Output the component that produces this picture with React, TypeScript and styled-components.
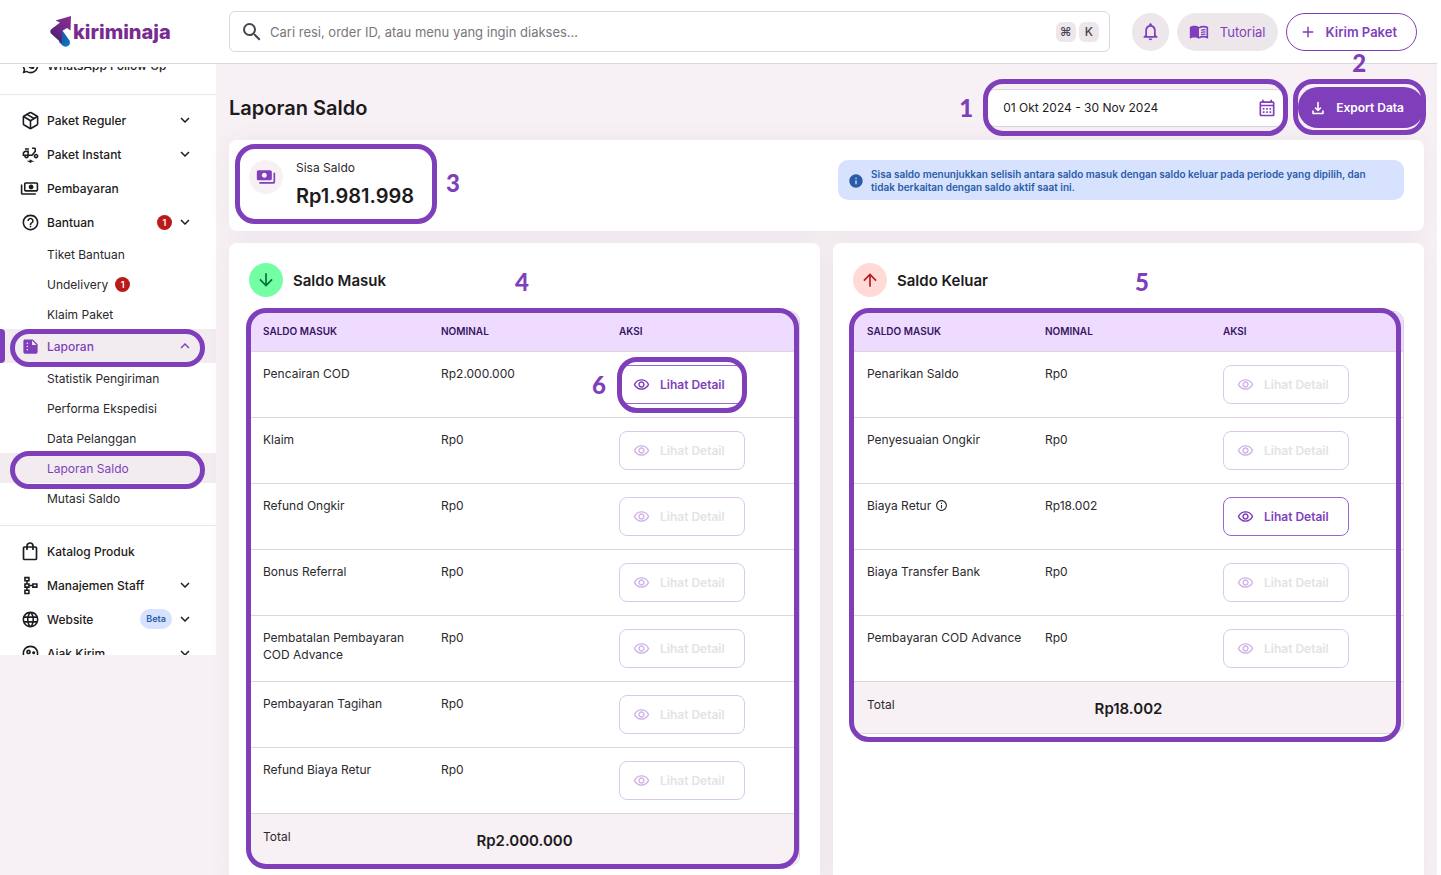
import React from "react";
import styled, { createGlobalStyle, css } from "styled-components";
import {
  MdAdd,
  MdArrowDownward,
  MdArrowUpward,
  MdExpandLess,
  MdExpandMore,
  MdHelpOutline,
  MdInfo,
  MdInfoOutline,
  MdLanguage,
  MdNotificationsNone,
  MdOutlineCalendarMonth,
  MdOutlineElectricMoped,
  MdOutlinePayments,
  MdOutlineRemoveRedEye,
  MdOutlineSchema,
  MdOutlineSupervisedUserCircle,
  MdPayments,
  MdSearch,
  MdSummarize,
} from "react-icons/md";
import { RiWhatsappLine } from "react-icons/ri";
import { LuPackage } from "react-icons/lu";

const color = {
  purple: "#7f3fbb",
  ink: "#1d1b20",
  text: "#2b292d",
  canvas: "#f7f1f5",
  chip: "#ede7eb",
  line: "#dcd6dc",
  red: "#ba1a1a",
  blue: "#2a5ca8",
  blueSoft: "#d7e2ff",
};

const GlobalStyle = createGlobalStyle`
  *, *::before, *::after { box-sizing: border-box; }
  body {
    margin: 0;
    background: #fff;
    color: ${color.text};
    font-family: Inter, "Liberation Sans", sans-serif;
    font-size: 12px;
  }
  button, input { font: inherit; color: inherit; }
  ul { list-style: none; margin: 0; padding: 0; }
  h1, h2, p { margin: 0; }
  a { color: inherit; text-decoration: none; }
`;

/* ---------- Guide annotations ---------- */

interface OutlineProps {
  $top: number;
  $right: number;
  $bottom: number;
  $left: number;
}

const Outline = styled.span<OutlineProps>`
  position: absolute;
  z-index: 2;
  top: ${(p) => p.$top}px;
  right: ${(p) => p.$right}px;
  bottom: ${(p) => p.$bottom}px;
  left: ${(p) => p.$left}px;
  border: 5px solid ${color.purple};
  border-radius: 20px;
  pointer-events: none;
`;

const StepNumber = styled.span<{ $top: number; $left: string }>`
  position: absolute;
  z-index: 2;
  top: ${(p) => p.$top}px;
  left: ${(p) => p.$left};
  color: ${color.purple};
  font: 900 24px/24px Lato, sans-serif;
  pointer-events: none;
`;

/* ---------- Shell ---------- */

const Shell = styled.div`
  display: flex;
  flex-direction: column;
  height: 100vh;
  padding-right: 4px;
  overflow: hidden;
`;

const Header = styled.header`
  display: flex;
  flex: none;
  align-items: center;
  height: 64px;
  padding-right: 20px;
  border-bottom: 1px solid ${color.line};
  background: #fff;
`;

const Brand = styled.a`
  display: flex;
  flex: none;
  align-items: center;
  gap: 2px;
  width: 229px;
  padding-left: 50px;
  color: #782b90;
  font-size: 20px;
  font-weight: 800;
  line-height: 24px;
`;

const SearchBox = styled.label`
  display: flex;
  flex: 1;
  align-items: center;
  gap: 6px;
  height: 41px;
  margin-right: 22px;
  padding: 0 10px;
  border: 1px solid ${color.line};
  border-radius: 6px;
`;

const SearchInput = styled.input`
  flex: 1;
  min-width: 0;
  padding: 0;
  border: 0;
  outline: 0;
  background: none;
  font-size: 13px;

  &::placeholder {
    color: #7b767d;
    opacity: 1;
  }
`;

const Key = styled.kbd`
  display: grid;
  place-items: center;
  width: 20px;
  height: 20px;
  margin-left: -3px;
  border-radius: 6px;
  background: ${color.chip};
  color: #49454f;
  font: 500 12px/20px Inter, "DejaVu Sans", sans-serif;
`;

const HeaderActions = styled.div`
  display: flex;
  gap: 8px;
`;

const PillButton = styled.button<{ $variant: "soft" | "outline" }>`
  display: flex;
  align-items: center;
  justify-content: center;
  gap: 11px;
  min-width: 37px;
  height: 38px;
  padding: 0 12px;
  border: 0;
  border-radius: 19px;
  background: ${color.chip};
  color: ${color.purple};
  font-size: 13px;
  white-space: nowrap;

  ${(p) =>
    p.$variant === "outline" &&
    css`
      gap: 9px;
      padding: 0 19px 0 12px;
      border: 1px solid ${color.purple};
      background: #fff;
      font-weight: 600;
    `}
`;

const RoundButton = styled(PillButton)`
  width: 37px;
  padding: 0;
`;

const Body = styled.div`
  display: flex;
  flex: 1;
  min-height: 0;
  align-items: flex-start;
  background: ${color.canvas};
`;

/* ---------- Sidebar ---------- */

const Sidebar = styled.nav`
  flex: none;
  width: 216px;
  height: calc(75vh - 65px);
  padding-top: 3px;
  background: #fff;
`;

const SidebarScroll = styled.div`
  height: 100%;
  overflow: hidden;
`;

const MenuGroup = styled.ul`
  padding: 8px 0 12px;
  border-top: 1px solid #ebe6ea;

  &:first-child {
    margin-top: -27px;
    border-top: 0;
  }
`;

const MenuEntry = styled.li`
  position: relative;
`;

const MenuLink = styled.a<{ $active?: boolean }>`
  display: flex;
  align-items: center;
  gap: 8px;
  height: 34px;
  padding: 0 22px 0 21px;
  color: ${color.ink};
  font-weight: 500;
  white-space: nowrap;

  ${(p) =>
    p.$active &&
    css`
      background: #f2ecf1;
      color: ${color.purple};

      &::before {
        content: "";
        position: absolute;
        top: 0;
        bottom: 0;
        left: 0;
        width: 5px;
        border-radius: 0 4px 4px 0;
        background: ${color.purple};
      }
    `}
`;

const MenuIcon = styled.span<{ $mirrored?: boolean }>`
  display: grid;
  place-items: center;
  width: 18px;
  height: 18px;
  font-size: 19px;
  transform: ${(p) => (p.$mirrored ? "scaleX(-1)" : "none")};
`;

const MenuEnd = styled.span`
  display: flex;
  align-items: center;
  gap: 4px;
  margin-left: auto;
  font-size: 18px;
`;

const SubLink = styled.a<{ $active?: boolean }>`
  display: flex;
  align-items: center;
  gap: 7px;
  height: 30px;
  padding-left: 47px;
  background: ${(p) => (p.$active ? "#f2ecf1" : "none")};
  color: ${(p) => (p.$active ? color.purple : color.text)};
`;

const CountBadge = styled.span`
  display: grid;
  place-items: center;
  width: 15px;
  height: 15px;
  border-radius: 50%;
  background: ${color.red};
  color: #fff;
  font-size: 9px;
  font-weight: 600;
`;

const BetaBadge = styled.span`
  padding: 0 6px;
  border-radius: 10px;
  background: ${color.blueSoft};
  color: ${color.blue};
  font-size: 9px;
  font-weight: 600;
  line-height: 20px;
`;

/* ---------- Main ---------- */

const Main = styled.main`
  display: flex;
  flex: 1;
  flex-direction: column;
  gap: 12px;
  min-width: 0;
  height: 100%;
  padding: 23px 13px 0;
`;

const TitleRow = styled.div`
  display: flex;
  flex: none;
  align-items: center;
  height: 41px;
`;

const PageTitle = styled.h1`
  color: ${color.ink};
  font-size: 20px;
  font-weight: 600;
`;

const DateField = styled.label`
  position: relative;
  display: flex;
  align-items: center;
  width: 298px;
  height: 38px;
  margin: 0 13px 0 auto;
  padding: 0 7px 0 15px;
  border: 1px solid ${color.line};
  border-radius: 8px;
  background: #fff;
  color: ${color.purple};
`;

const DateInput = styled.input`
  flex: 1;
  min-width: 0;
  padding: 0;
  border: 0;
  outline: 0;
  background: none;
  color: ${color.ink};
`;

const ExportButton = styled.button`
  position: relative;
  display: flex;
  align-items: center;
  gap: 10px;
  height: 41px;
  padding: 0 20px 0 12px;
  border: 0;
  border-radius: 20px;
  background: ${color.purple};
  color: #fff;
  font-weight: 600;
  white-space: nowrap;
`;

const Card = styled.section`
  position: relative;
  padding: 20px;
  border-radius: 8px;
  background: #fff;
  box-shadow: 0 0 24px rgba(70, 40, 60, 0.06);
`;

const BalanceCard = styled(Card)`
  display: flex;
  flex: none;
  align-items: flex-start;
  gap: 13px;
  height: 91px;
`;

const RoundIcon = styled.span<{ $bg: string; $fg: string }>`
  display: grid;
  flex: none;
  place-items: center;
  width: 34px;
  height: 34px;
  border-radius: 50%;
  background: ${(p) => p.$bg};
  color: ${(p) => p.$fg};
  font-size: 20px;
`;

const BalanceLabel = styled.p`
  line-height: 16px;
`;

const BalanceValue = styled.p`
  margin-top: 8px;
  color: ${color.ink};
  font-size: 20px;
  font-weight: 600;
  line-height: 24px;
`;

const Notice = styled.p`
  display: flex;
  flex: 0 0 49%;
  align-items: center;
  gap: 7px;
  min-height: 40px;
  margin-left: auto;
  padding: 8px 20px 6px 10px;
  border-radius: 10px;
  background: ${color.blueSoft};
  color: ${color.blue};
  font-size: 10px;
  font-weight: 600;
  line-height: 13px;

  svg {
    flex: none;
  }
`;

const Columns = styled.div`
  display: grid;
  flex: 1 0 auto;
  grid-template-columns: 1fr 1fr;
  gap: 13px;
`;

const CardHeading = styled.div`
  display: flex;
  align-items: center;
  gap: 10px;
  margin-bottom: 14px;
`;

const CardTitle = styled.h2`
  color: ${color.ink};
  font-size: 15px;
  font-weight: 600;
`;

const TableFrame = styled.div`
  position: relative;
`;

const Table = styled.table`
  width: 100%;
  table-layout: fixed;
  border: 1px solid ${color.line};
  border-radius: 10px;
  border-spacing: 0;
  overflow: hidden;
`;

const HeadCell = styled.th`
  height: 40px;
  padding: 0 13px 2px;
  border-bottom: 1px solid ${color.line};
  background: #eedbff;
  color: #36155f;
  font-size: 10px;
  font-weight: 600;
  text-align: left;

  &:not(:last-child) {
    width: 178px;
  }
`;

const Cell = styled.td`
  height: 66px;
  padding: 13px 8px 0 13px;
  border-bottom: 1px solid ${color.line};
  line-height: 17px;
  vertical-align: top;

  svg {
    vertical-align: -2px;
  }
`;

const ActionCell = styled(Cell)`
  line-height: 0;
`;

const DetailButton = styled.button`
  position: relative;
  display: inline-flex;
  align-items: center;
  gap: 10px;
  height: 39px;
  padding: 0 19px 0 13px;
  border: 1px solid #9b66cf;
  border-radius: 8px;
  background: #fff;
  color: ${color.purple};
  font-weight: 600;
  line-height: 16px;
  white-space: nowrap;

  &:disabled {
    border-color: #dcc8ef;
    color: #e4e2e5;
  }

  &:disabled svg {
    color: #d0b5e8;
  }
`;

const TotalCell = styled.td`
  padding: 0 13px;
  background: ${color.canvas};
`;

const TotalLine = styled.div`
  display: grid;
  grid-template-columns: 1fr auto 1fr;
  align-items: start;
  height: 51px;
  padding-top: 14px;
  line-height: 17px;
`;

const TotalValue = styled.strong`
  color: ${color.ink};
  font-size: 15px;
  font-weight: 600;
  line-height: 26px;
`;

/* ---------- Drawings ---------- */

const BrandMark = () => (
  <svg width="21" height="31" viewBox="0 0 21 31" aria-hidden="true">
    <defs>
      <linearGradient id="mark-purple" x1="1" y1="0" x2="0.2" y2="1">
        <stop offset="0" stopColor="#8a2c91" />
        <stop offset="0.5" stopColor="#6f2a88" />
        <stop offset="1" stopColor="#3f1d6e" />
      </linearGradient>
      <linearGradient id="mark-blue" x1="0" y1="0" x2="1" y2="1">
        <stop offset="0" stopColor="#1b4fa0" />
        <stop offset="1" stopColor="#0a7cc4" />
      </linearGradient>
    </defs>
    <path d="M12 14 19.500 24.500q1.500 4-1.500 5.500-3 1.500-5.500-.5L9 26Z" fill="url(#mark-blue)" />
    <path d="M21 0 20.500 14.500 17 12 12 15V27.500L1 17.500Q-.5 15.500 1 13.500L10 6.500 5.500 4.500Z" fill="url(#mark-purple)" />
  </svg>
);

const BagIcon = () => (
  <svg width="18" height="19" viewBox="0 0 18 19" fill="none" stroke="currentColor" strokeWidth="1.700" aria-hidden="true">
    <rect x="2.500" y="5" width="13" height="12.500" rx="1" />
    <path d="M6 8V4a3 3 0 0 1 6 0v4" />
  </svg>
);

const DownloadIcon = () => (
  <svg width="16" height="16" viewBox="0 0 16 16" fill="none" stroke="currentColor" strokeWidth="1.600" aria-hidden="true">
    <path d="M8 2.500v8M5.500 8l2.500 2.500L10.500 8M3 11v2.500h10V11" strokeLinejoin="round" strokeLinecap="round" />
  </svg>
);

const BookIcon = () => (
  <svg width="20" height="20" viewBox="0 0 24 24" fill="none" stroke="currentColor" aria-hidden="true">
    <path
      d="M1 6c1.500-1 3.500-1.500 5.500-1.500S10.500 5 12 6v14c-1.500-1-3.500-1.500-5.500-1.500S2.500 19 1 20Z"
      fill="currentColor"
      stroke="none"
    />
    <path d="M12 7c1.500-1 3.500-1.500 5.500-1.500 1.500 0 3.200.3 4.500 1v12c-1.300-.6-3-.9-4.500-.9-2 0-4 .5-5.500 1.400" strokeWidth="2" />
    <path d="M14.500 10c1.700-.7 3.500-.9 5.300-.6M14.500 12.700c1.700-.7 3.500-.9 5.300-.6M14.500 15.400c1.700-.7 3.500-.9 5.300-.6" strokeWidth="1.500" />
  </svg>
);

/* ---------- Data ---------- */

interface SubItem {
  label: string;
  count?: number;
  active?: boolean;
}

interface Item {
  label: string;
  icon: React.ReactNode;
  mirrored?: boolean;
  expandable?: boolean;
  active?: boolean;
  count?: number;
  beta?: boolean;
  children?: SubItem[];
}

const menu: Item[][] = [
  [{ label: "WhatsApp Follow Up", icon: <RiWhatsappLine /> }],
  [
    { label: "Paket Reguler", icon: <LuPackage />, expandable: true },
    { label: "Paket Instant", icon: <MdOutlineElectricMoped />, expandable: true },
    { label: "Pembayaran", icon: <MdOutlinePayments />, mirrored: true },
    {
      label: "Bantuan",
      icon: <MdHelpOutline />,
      expandable: true,
      count: 1,
      children: [{ label: "Tiket Bantuan" }, { label: "Undelivery", count: 1 }, { label: "Klaim Paket" }],
    },
    {
      label: "Laporan",
      icon: <MdSummarize />,
      expandable: true,
      active: true,
      children: [
        { label: "Statistik Pengiriman" },
        { label: "Performa Ekspedisi" },
        { label: "Data Pelanggan" },
        { label: "Laporan Saldo", active: true },
        { label: "Mutasi Saldo" },
      ],
    },
  ],
  [
    { label: "Katalog Produk", icon: <BagIcon /> },
    { label: "Manajemen Staff", icon: <MdOutlineSchema />, expandable: true },
    { label: "Website", icon: <MdLanguage />, expandable: true, beta: true },
    { label: "Ajak Kirim", icon: <MdOutlineSupervisedUserCircle />, expandable: true },
  ],
];

interface Row {
  label: string;
  amount: string;
  info?: boolean;
  enabled?: boolean;
  step?: number;
}

const incoming: Row[] = [
  { label: "Pencairan COD", amount: "Rp2.000.000", enabled: true, step: 6 },
  { label: "Klaim", amount: "Rp0" },
  { label: "Refund Ongkir", amount: "Rp0" },
  { label: "Bonus Referral", amount: "Rp0" },
  { label: "Pembatalan Pembayaran COD Advance", amount: "Rp0" },
  { label: "Pembayaran Tagihan", amount: "Rp0" },
  { label: "Refund Biaya Retur", amount: "Rp0" },
];

const outgoing: Row[] = [
  { label: "Penarikan Saldo", amount: "Rp0" },
  { label: "Penyesuaian Ongkir", amount: "Rp0" },
  { label: "Biaya Retur", amount: "Rp18.002", info: true, enabled: true },
  { label: "Biaya Transfer Bank", amount: "Rp0" },
  { label: "Pembayaran COD Advance", amount: "Rp0" },
];

/* ---------- Parts ---------- */

const MenuItem = ({ item }: { item: Item }) => (
  <li>
    <MenuEntry as="div">
      <MenuLink href="#" $active={item.active}>
        <MenuIcon $mirrored={item.mirrored}>{item.icon}</MenuIcon>
        {item.label}
        <MenuEnd>
          {item.count && <CountBadge>{item.count}</CountBadge>}
          {item.beta && <BetaBadge>Beta</BetaBadge>}
          {item.expandable && (item.active ? <MdExpandLess /> : <MdExpandMore />)}
        </MenuEnd>
      </MenuLink>
      {item.active && <Outline $top={0} $right={11} $bottom={-4} $left={10} />}
    </MenuEntry>
    {item.children && (
      <ul>
        {item.children.map((child) => (
          <MenuEntry key={child.label}>
            <SubLink href="#" $active={child.active}>
              {child.label}
              {child.count && <CountBadge>{child.count}</CountBadge>}
            </SubLink>
            {child.active && <Outline $top={-2} $right={11} $bottom={-6} $left={10} />}
          </MenuEntry>
        ))}
      </ul>
    )}
  </li>
);

const BalanceTable = ({ rows, total }: { rows: Row[]; total: string }) => (
  <Table>
    <thead>
      <tr>
        <HeadCell>SALDO MASUK</HeadCell>
        <HeadCell>NOMINAL</HeadCell>
        <HeadCell>AKSI</HeadCell>
      </tr>
    </thead>
    <tbody>
      {rows.map((row) => (
        <tr key={row.label}>
          <Cell>
            {row.label} {row.info && <MdInfoOutline size={13} />}
          </Cell>
          <Cell>{row.amount}</Cell>
          <ActionCell>
            <DetailButton disabled={!row.enabled}>
              <MdOutlineRemoveRedEye size={17} />
              Lihat Detail
              {row.step && (
                <>
                  <Outline $top={-9} $right={-3} $bottom={-10} $left={-3} />
                  <StepNumber $top={7} $left="-28px">
                    {row.step}
                  </StepNumber>
                </>
              )}
            </DetailButton>
          </ActionCell>
        </tr>
      ))}
    </tbody>
    <tfoot>
      <tr>
        <TotalCell colSpan={3}>
          <TotalLine>
            <span>Total</span>
            <TotalValue>{total}</TotalValue>
          </TotalLine>
        </TotalCell>
      </tr>
    </tfoot>
  </Table>
);

export default function App() {
  return (
    <>
      <GlobalStyle />
      <Shell>
        <Header>
          <Brand href="#">
            <BrandMark />
            kiriminaja
          </Brand>
          <SearchBox>
            <MdSearch size={24} color="#49454f" />
            <SearchInput
              type="text"
              aria-label="Cari"
              placeholder="Cari resi, order ID, atau menu yang ingin diakses..."
            />
            <Key>⌘</Key>
            <Key>K</Key>
          </SearchBox>
          <HeaderActions>
            <RoundButton $variant="soft" aria-label="Notifikasi">
              <MdNotificationsNone size={21} />
            </RoundButton>
            <PillButton $variant="soft">
              <BookIcon />
              Tutorial
            </PillButton>
            <PillButton $variant="outline">
              <MdAdd size={18} />
              Kirim Paket
            </PillButton>
          </HeaderActions>
        </Header>
        <Body>
          <Sidebar>
            <SidebarScroll>
              {menu.map((group) => (
                <MenuGroup key={group[0].label}>
                  {group.map((item) => (
                    <MenuItem key={item.label} item={item} />
                  ))}
                </MenuGroup>
              ))}
            </SidebarScroll>
          </Sidebar>
          <Main>
            <TitleRow>
              <PageTitle>Laporan Saldo</PageTitle>
              <DateField>
                <DateInput type="text" aria-label="Periode" defaultValue="01 Okt 2024 - 30 Nov 2024" />
                <MdOutlineCalendarMonth size={20} />
                <Outline $top={-11} $right={-4} $bottom={-10} $left={-5} />
                <StepNumber $top={6} $left="-29px">
                  1
                </StepNumber>
              </DateField>
              <ExportButton>
                <DownloadIcon />
                Export Data
                <Outline $top={-8} $right={-2} $bottom={-7} $left={-5} />
                <StepNumber $top={-36} $left="54px">
                  2
                </StepNumber>
              </ExportButton>
            </TitleRow>
            <BalanceCard>
              <RoundIcon $bg={color.canvas} $fg={color.purple}>
                <MdPayments />
              </RoundIcon>
              <div>
                <BalanceLabel>Sisa Saldo</BalanceLabel>
                <BalanceValue>Rp1.981.998</BalanceValue>
              </div>
              <Notice>
                <MdInfo size={16} />
                Sisa saldo menunjukkan selisih antara saldo masuk dengan saldo keluar pada periode yang dipilih, dan
                tidak berkaitan dengan saldo aktif saat ini.
              </Notice>
              <Outline $top={4} $right={987} $bottom={7} $left={6} />
              <StepNumber $top={31} $left="217px">
                3
              </StepNumber>
            </BalanceCard>
            <Columns>
              <Card>
                <CardHeading>
                  <RoundIcon $bg="#74ffa4" $fg="#00723a">
                    <MdArrowDownward />
                  </RoundIcon>
                  <CardTitle>Saldo Masuk</CardTitle>
                </CardHeading>
                <StepNumber $top={27} $left="286px">
                  4
                </StepNumber>
                <TableFrame>
                  <BalanceTable rows={incoming} total="Rp2.000.000" />
                  <Outline $top={-3} $right={1} $bottom={-3} $left={-3} />
                </TableFrame>
              </Card>
              <Card>
                <CardHeading>
                  <RoundIcon $bg="#ffdad6" $fg={color.red}>
                    <MdArrowUpward />
                  </RoundIcon>
                  <CardTitle>Saldo Keluar</CardTitle>
                </CardHeading>
                <StepNumber $top={27} $left="302px">
                  5
                </StepNumber>
                <TableFrame>
                  <BalanceTable rows={outgoing} total="Rp18.002" />
                  <Outline $top={-3} $right={3} $bottom={-8} $left={-4} />
                </TableFrame>
              </Card>
            </Columns>
          </Main>
        </Body>
      </Shell>
    </>
  );
}
